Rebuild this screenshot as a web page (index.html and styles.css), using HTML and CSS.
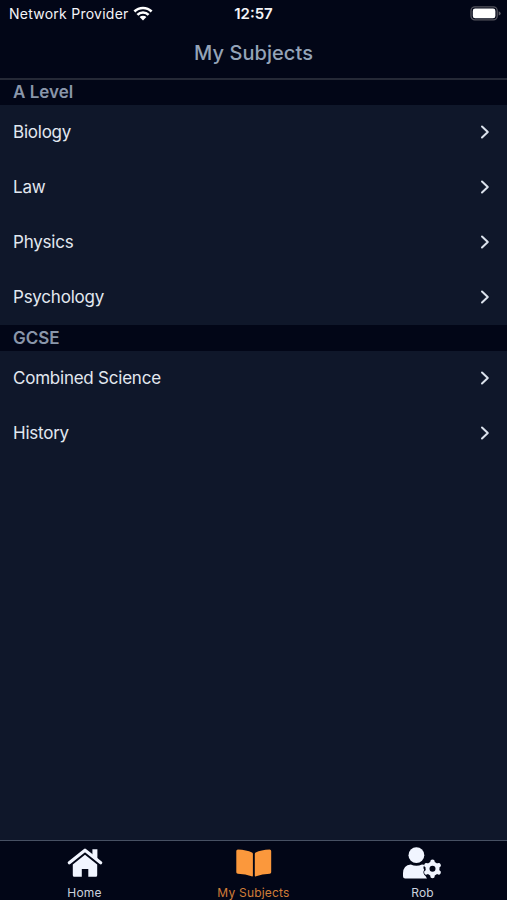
FILE: index.html
```html
<!DOCTYPE html>
<html lang="en">
<head>
<meta charset="utf-8">
<title>My Subjects</title>
<link rel="stylesheet" href="styles.css">
</head>
<body>
<div class="app">
  <header class="header">
    <div class="status">
      <div class="carrier"><span class="carrier-name">Network Provider</span>
        <svg class="wifi" width="20" height="15" viewBox="0 0 20 15" fill="none" stroke="#fff" stroke-width="2.6"><path d="M1.4 5.5A12.2 12.2 0 0 1 18.6 5.5M4.4 8.8A7.9 7.9 0 0 1 15.6 8.8"/><path d="M6.6 11.1A4.8 4.8 0 0 1 13.4 11.1L10 14.4Z" fill="#fff" stroke="none"/></svg>
      </div>
      <time class="clock">12:57</time>
      <svg class="battery" width="31" height="15" viewBox="0 0 31 15"><rect x="1" y=".9" width="26.2" height="13" rx="3.8" fill="none" stroke="#55555f" stroke-width="1.3"/><rect x="2.8" y="2.6" width="22.6" height="9.7" rx="2.3" fill="#fff"/><path d="M28.7 5.2Q30.7 6 30.7 7.4T28.7 9.6Z" fill="#62626b"/></svg>
    </div>
    <h1 class="title"><span>My Subjects</span></h1>
  </header>
  <main class="content">
    <h2 class="section">A Level</h2>
    <ul class="list">
      <li class="row"><span>Biology</span><svg class="chevron" viewBox="0 0 10 14"><path d="M2 1.5 7.8 7 2 12.5"/></svg></li>
      <li class="row"><span>Law</span><svg class="chevron" viewBox="0 0 10 14"><path d="M2 1.5 7.8 7 2 12.5"/></svg></li>
      <li class="row"><span>Physics</span><svg class="chevron" viewBox="0 0 10 14"><path d="M2 1.5 7.8 7 2 12.5"/></svg></li>
      <li class="row"><span>Psychology</span><svg class="chevron" viewBox="0 0 10 14"><path d="M2 1.5 7.8 7 2 12.5"/></svg></li>
    </ul>
    <h2 class="section gcse">GCSE</h2>
    <ul class="list">
      <li class="row"><span>Combined Science</span><svg class="chevron" viewBox="0 0 10 14"><path d="M2 1.5 7.8 7 2 12.5"/></svg></li>
      <li class="row"><span>History</span><svg class="chevron" viewBox="0 0 10 14"><path d="M2 1.5 7.8 7 2 12.5"/></svg></li>
    </ul>
  </main>
  <nav class="tabs">
    <a class="tab">
      <svg width="40" height="36" viewBox="0 0 40 36" fill="currentColor"><path d="M4.3 17.7 20 5.2 35.7 17.7" fill="none" stroke="currentColor" stroke-width="3.2" stroke-linecap="round" stroke-linejoin="round"/><path d="M27.4 4.2H32.4v11l-5-4Z"/><path d="M20 9.7 32.2 19.4V30.3Q32.2 31.8 30.8 31.8H23.3V24H16.8V31.8H9.2Q7.8 31.8 7.8 30.3V19.4Z"/></svg>
      <span>Home</span>
    </a>
    <a class="tab active">
      <svg width="40" height="36" viewBox="0 0 40 36" fill="currentColor"><path d="M2.3 6Q2.3 4.4 3.9 4.4 12.5 4.7 18 7.5 18.9 8 18.9 8.9V30.4Q18.9 31.8 17.6 31.2 11.8 28.9 3.8 28.7 2.3 28.6 2.3 27.2ZM37.2 6Q37.2 4.4 35.6 4.4 27 4.7 21.7 7.5 20.8 8 20.8 8.9V30.4Q20.8 31.8 22.1 31.2 28 28.9 35.7 28.7 37.2 28.6 37.2 27.2Z"/></svg>
      <span>My Subjects</span>
    </a>
    <a class="tab">
      <svg width="40" height="36" viewBox="1 0 40 36"><circle cx="14.4" cy="10.2" r="7.9" fill="currentColor"/><path d="M8.8 19.4Q14.4 22 20 19.4 22.1 19.5 22.8 19.9 20.4 22 22.2 24.7 20 28 23.7 31.2 24.4 32.4 25 33.6H3.2Q1 33.4 1 31.2V28.2Q1.2 20 8.8 19.4Z" fill="currentColor"/><g transform="translate(30.5 23.8)"><g stroke="currentColor" stroke-width="4.5" stroke-linecap="round"><path d="M0-7.1V7.1M-6.15-3.55 6.15 3.55M-6.15 3.55 6.15-3.55"/></g><circle r="7" fill="currentColor"/><circle r="3" fill="#020617"/></g></svg>
      <span>Rob</span>
    </a>
  </nav>
</div>
</body>
</html>
```
FILE: styles.css
```css
* { box-sizing: border-box; }
body { margin: 0; background: #0f172a; font-family: Inter, "Liberation Sans", sans-serif; }
.app { display: flex; flex-direction: column; height: 900px; overflow: hidden; }
.header { height: 80px; background: #020617; border-bottom: 2px solid #252936; }
.status { height: 27px; display: grid; grid-template-columns: 1fr auto 1fr; align-items: center; padding: 0 6px 0 9px; color: #f4f4f7; font-size: 14px; }
.carrier { display: flex; align-items: center; gap: 4px; white-space: nowrap; letter-spacing: .25px; }
.wifi { margin-bottom: 1px; }
.clock { margin-right: 3px; font-weight: 600; font-size: 15px; }
.battery { justify-self: end; }
.title { margin: 0; height: 51px; line-height: 52px; text-align: center; font-size: 20px; letter-spacing: .06px; font-weight: 500; color: #94a3b8; }
.content { flex: 1; }
.section { margin: 0; height: 25px; line-height: 24px; padding-left: 13px; background: #020617; color: #8a96aa; font-size: 17px; font-weight: 600; }
.gcse { height: 26px; line-height: 26px; }
.list { margin: 0; padding: 0; list-style: none; }
.row { height: 55px; display: flex; align-items: center; justify-content: space-between; padding: 0 17px 1px 13px; color: #e2e8f0; font-size: 17px; letter-spacing: -.23px; }
.chevron { width: 10px; height: 14px; fill: none; stroke: #dbe2ec; stroke-width: 2; stroke-linecap: round; stroke-linejoin: round; }
.tabs { height: 60px; display: grid; grid-template-columns: repeat(3, 1fr); background: #020617; border-top: 1px solid #475063; }
.tab { display: flex; flex-direction: column; align-items: center; padding-top: 4px; color: #f1f5ff; font-size: 12px; line-height: 15px; }
.tab svg { display: block; }
.tab span { margin-top: 4px; letter-spacing: .2px; color: #cbd2de; }
.tab.active { color: #fb983c; }
.tab.active span { color: #d17d38; }
```
